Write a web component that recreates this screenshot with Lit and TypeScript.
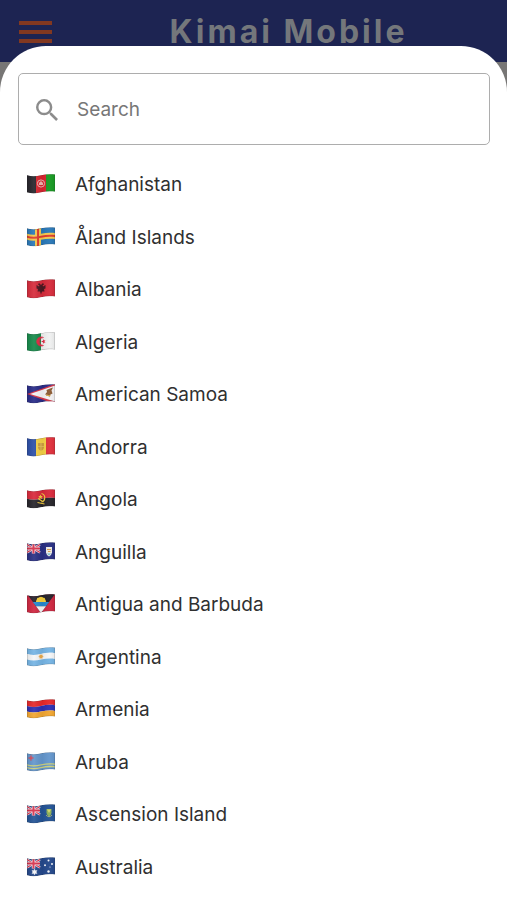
import { LitElement, html, svg, css, type SVGTemplateResult } from "lit";
import { customElement, property, state } from "lit/decorators.js";

/* A horizontal band between y0 and y1 that follows the ripple of the cloth. */
const band = (y0: number, y1: number) =>
  `M0 ${y0 + 1.3}C4 ${y0 + 2.6} 9 ${y0 + 2.6} 14 ${y0 + 1.3}C19 ${y0} 24 ${y0 - 0.2} 28 ${y0 + 0.6}` +
  `V${y1 + 0.6}C24 ${y1 - 0.2} 19 ${y1} 14 ${y1 + 1.3}C9 ${y1 + 2.6} 4 ${y1 + 2.6} 0 ${y1 + 1.3}Z`;

const CLOTH = band(0, 17);
const stripe = (y0: number, y1: number, fill: string) => svg`<path d=${band(y0, y1)} fill=${fill}/>`;
const pole = (x: number, width: number, fill: string) =>
  svg`<rect x=${x} y="0" width=${width} height="20" fill=${fill}/>`;

const unionJack = svg`
  <path d="M0 2.500L13 10.500M0 10.500L13 2.500" stroke="#f1e6ee" stroke-width="2.400"/>
  <path d="M0 2.500L13 10.500M0 10.500L13 2.500" stroke="#d8314b" stroke-width="1.100"/>
  <path d="M6.500 1V11.500M0 6.500H13" stroke="#f1e6ee" stroke-width="3.400"/>
  <path d="M6.500 1V11.500M0 6.500H13" stroke="#d8314b" stroke-width="2"/>`;

const art: Record<string, SVGTemplateResult> = {
  af: svg`${pole(0, 9, "#26242a")}${pole(9, 10, "#d8242e")}${pole(19, 9, "#179a22")}
    <circle cx="14" cy="9.500" r="3.600" fill="none" stroke="#f0b5b0" stroke-width="1"/>
    <path d="M12 11V9L14 7L16 9V11Z" fill="#f0b5b0"/>`,
  ax: svg`${stripe(0, 17, "#2978b8")}
    ${pole(8, 6, "#f4c84d")}${stripe(5.5, 11.5, "#f4c84d")}
    ${pole(10, 2, "#e03b2c")}${stripe(7.5, 9.5, "#e03b2c")}`,
  al: svg`${stripe(0, 17, "#d62b3b")}
    <path d="M14 6L12 4L11 5.500L12.500 6.500L12 7.500L9.500 6V9.500L11 10L10.500 12.500L13 12.500L14 15.500L15 12.500L17.500 12.500L17 10L18.500 9.500V6L16 7.500L15.500 6.500L17 5.500L16 4Z" fill="#4a1821"/>`,
  dz: svg`${pole(0, 14, "#168a4a")}${pole(14, 14, "#f0f1f1")}
    <path d="M16.500 5.500A4.600 4.600 0 1 0 16.500 13.500A4 4 0 1 1 16.500 5.500Z" fill="#e02943" stroke="#e02943" stroke-width="0.600"/>
    <path d="M14 9.500L16 8.700V7L17 8.500L18.500 8.100L17.500 9.500L18.500 10.900L17 10.500L16 12V10.300Z" fill="#e02943"/>`,
  as: svg`${stripe(0, 17, "#282b88")}
    <path d="M0 10L28 0V20Z" fill="#d83445"/>
    <path d="M3 10L28 1.500V17.500Z" fill="#f4f3f5"/>
    <path d="M18 10.500L20 8L19.500 6L23 4.500L26 3.500L24.500 6.500L25.500 9.500L23.500 10.500L22 13.500L21.500 11Z" fill="#8b5a32"/>
    <path d="M19 11.300L23.500 11.700" stroke="#d9a740" stroke-width="1"/>`,
  ad: svg`${pole(0, 9, "#2c4fa8")}${pole(9, 10, "#f4d045")}${pole(19, 9, "#e02f3b")}
    <path d="M11 6H17V11Q16 13.500 14 13.500Q12 13.500 11 11Z" fill="#cf9f40"/>
    <path d="M14 6V13.500M11 9.500H17" stroke="#e6c260" stroke-width="0.800"/>`,
  ao: svg`${stripe(0, 8.5, "#d9293b")}${stripe(8.5, 17, "#252329")}
    <path d="M14.500 4.500A4.400 4.400 0 0 1 14.500 13M10.500 13.500L17.500 15M11 9.500L16.500 13" stroke="#f0c93f" stroke-width="1.200" fill="none"/>
    <path d="M13.500 5.500L14.200 7L15.800 7.200L14.600 8.300L15 10L13.500 9L12 10L12.400 8.300L11.200 7.200L12.800 7Z" fill="#f0c93f"/>`,
  ai: svg`${stripe(0, 17, "#292f83")}${unionJack}
    <path d="M19 5H25V10.500Q24.500 13.500 22 14.500Q19.500 13.500 19 10.500Z" fill="#eceae4"/>
    <path d="M20 7.500H24M21 9.500H23.500" stroke="#d99a4b" stroke-width="1.200"/>
    <path d="M20 11.500H24L22 13.500Z" fill="#68b6ce"/>`,
  ag: svg`${stripe(0, 17, "#cf2640")}
    <path d="M0 0H28L14 19Z" fill="#242129"/>
    <path d="M9 8A5 5 0 0 1 19 8Z" fill="#f6d03c"/>
    <path d="M14 2.400L15.400 4.500L18 3.800L17 7H11L10 3.800L12.600 4.500Z" fill="#f6d03c"/>
    <path d="M5.800 8H22.200L19 12.300H9Z" fill="#2688cf"/>
    <path d="M9 12.300H19L14 19Z" fill="#f8f8f9"/>`,
  ar: svg`${stripe(0, 5.7, "#75b4e4")}${stripe(5.7, 11.3, "#f5f6f7")}${stripe(11.3, 17, "#75b4e4")}
    <circle cx="14" cy="9.600" r="1.800" fill="#e8a94a"/>
    <path d="M14 7V12.200M11.400 9.600H16.600M12.200 7.800L15.800 11.400M15.800 7.800L12.200 11.400" stroke="#e8a94a" stroke-width="0.500"/>`,
  am: svg`${stripe(0, 5.7, "#e6282a")}${stripe(5.7, 11.3, "#2c2fb1")}${stripe(11.3, 17, "#f2a630")}`,
  aw: svg`${stripe(0, 17, "#6496cc")}${stripe(11, 12.3, "#ccd07c")}${stripe(13.7, 15, "#ccd07c")}
    <path d="M4 3L4.800 5.200L7 6L4.800 6.800L4 9L3.200 6.800L1 6L3.200 5.200Z" fill="#d64c5c" stroke="#d64c5c" stroke-width="0.300"/>`,
  ac: svg`${stripe(0, 17, "#235395")}${unionJack}
    <path d="M19.500 5H24.500V9Q24 11.500 22 12.500Q20 11.500 19.500 9Z" fill="#8cb055"/>
    <path d="M20 5.500H24L22 9Z" fill="#d5d66a"/>
    <path d="M19 11Q22 14.500 25 11" stroke="#a4b070" stroke-width="1" fill="none"/>`,
  au: svg`${stripe(0, 17, "#24488b")}${unionJack}
    <path d="M7.500 12.300L8.200 13.800L9.900 13.600L9 15L9.900 16.400L8.200 16.200L7.500 17.700L6.800 16.200L5.100 16.400L6 15L5.100 13.600L6.800 13.800Z" fill="#f3f4f6" stroke="#f3f4f6" stroke-width="0.600"/>
    <g fill="#f3f4f6"><circle cx="21.500" cy="3.500" r="1"/><circle cx="18" cy="8.300" r="1"/><circle cx="25" cy="7" r="1"/><circle cx="21.500" cy="14.500" r="1.200"/><circle cx="23" cy="10" r="0.600"/></g>`,
};

const COUNTRIES: [string, string][] = [
  ["af", "Afghanistan"],
  ["ax", "Åland Islands"],
  ["al", "Albania"],
  ["dz", "Algeria"],
  ["as", "American Samoa"],
  ["ad", "Andorra"],
  ["ao", "Angola"],
  ["ai", "Anguilla"],
  ["ag", "Antigua and Barbuda"],
  ["ar", "Argentina"],
  ["am", "Armenia"],
  ["aw", "Aruba"],
  ["ac", "Ascension Island"],
  ["au", "Australia"],
];

@customElement("country-flag")
export class CountryFlag extends LitElement {
  static styles = css`
    :host { display: block; flex: none; padding-bottom: 2px; }
    .flag { display: block; width: 28px; height: 20px; }
  `;

  @property() code = "";

  render() {
    return html`<svg class="flag" viewBox="0 0 28 20" aria-hidden="true">
      <defs>
        <clipPath id="cloth"><path d=${CLOTH} /></clipPath>
        <linearGradient id="light">
          <stop offset="0" stop-color="#000" stop-opacity="0.08" />
          <stop offset="0.25" stop-color="#fff" stop-opacity="0.08" />
          <stop offset="0.55" stop-color="#000" stop-opacity="0.05" />
          <stop offset="0.8" stop-color="#fff" stop-opacity="0.04" />
          <stop offset="1" stop-color="#000" stop-opacity="0.06" />
        </linearGradient>
      </defs>
      <g clip-path="url(#cloth)">
        ${art[this.code]}
        <path d=${CLOTH} fill="url(#light)" stroke="#333" stroke-opacity="0.3" stroke-width="1" />
      </g>
    </svg>`;
  }
}

@customElement("app-root")
export class AppRoot extends LitElement {
  static styles = css`
    :host {
      display: flex;
      flex-direction: column;
      min-height: 100vh;
      background: #777675;
      font-family: Inter, "Liberation Sans", sans-serif;
      font-size: 19px;
      line-height: 24px;
      color: #303030;
    }
    .bar {
      display: flex;
      align-items: center;
      box-sizing: border-box;
      height: 62px;
      padding: 2px 18px 0;
      background: #1d2452;
    }
    .menu {
      display: block;
      padding: 0;
      border: 0;
      background: none;
    }
    .menu svg { display: block; width: 34px; height: 24px; }
    .title {
      flex: 1;
      margin: 0;
      padding-left: 52px;
      padding-right: 16px;
      font-size: 32px;
      line-height: 40px;
      font-weight: 700;
      letter-spacing: 3px;
      text-align: center;
      white-space: nowrap;
      color: #74777b;
    }
    .sheet {
      flex: 1;
      margin-top: -16px;
      padding: 27px 17px 6px 18px;
      border-radius: 46px 46px 0 0;
      background: #fff;
    }
    .search {
      display: flex;
      align-items: center;
      gap: 19px;
      box-sizing: border-box;
      height: 72px;
      padding: 1px 17px 0;
      border: 1px solid #adadad;
      border-radius: 5px;
    }
    .glass { flex: none; width: 22px; height: 22px; }
    .field {
      flex: 1;
      min-width: 0;
      padding: 0;
      border: 0;
      outline: 0;
      background: none;
      font: inherit;
      color: inherit;
    }
    .field::placeholder { color: #777; opacity: 1; }
    .list {
      display: grid;
      grid-auto-rows: 52px 53px;
      margin: 14px 0 0;
      padding: 0;
      list-style: none;
    }
    .country {
      display: flex;
      align-items: center;
      gap: 20px;
      width: 100%;
      height: 100%;
      padding: 0 9px;
      border: 0;
      background: none;
      font: inherit;
      color: inherit;
      text-align: left;
    }
  `;

  @state() private query = "";

  render() {
    const query = this.query.trim().toLowerCase();
    const shown = COUNTRIES.filter(([, name]) => name.toLowerCase().includes(query));
    return html`
      <header class="bar">
        <button class="menu" type="button" aria-label="Open menu">
          <svg viewBox="0 0 34 24" aria-hidden="true">
            <path d="M1 3H34M1 12H34M1 21H34" stroke="#823820" stroke-width="4" />
          </svg>
        </button>
        <h1 class="title">Kimai Mobile</h1>
      </header>
      <main class="sheet">
        <label class="search">
          <svg class="glass" viewBox="3 3 17.500 17.500" aria-hidden="true">
            <path
              fill="#8c8c8c"
              d="M15.500 14h-.790l-.280-.270A6.471 6.471 0 0 0 16 9.500 6.500 6.500 0 1 0 9.500 16c1.610 0 3.090-.590 4.230-1.570l.270.280v.790l5 4.990L20.490 19l-4.990-5zm-6 0C7.010 14 5 11.990 5 9.500S7.010 5 9.500 5 14 7.010 14 9.500 11.990 14 9.500 14z"
            />
          </svg>
          <input
            class="field"
            type="text"
            placeholder="Search"
            aria-label="Search"
            .value=${this.query}
            @input=${(e: Event) => (this.query = (e.target as HTMLInputElement).value)}
          />
        </label>
        <ul class="list">
          ${shown.map(
            ([code, name]) => html`<li>
              <button class="country" type="button">
                <country-flag code=${code}></country-flag>
                <span>${name}</span>
              </button>
            </li>`
          )}
        </ul>
      </main>
    `;
  }
}
